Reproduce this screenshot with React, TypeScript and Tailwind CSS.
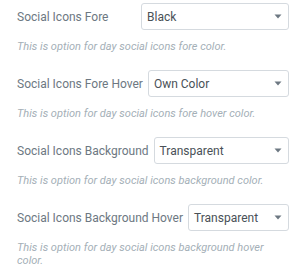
import React from "react";

const rows = [
  { label: "Social Icons Fore", value: "Black", desc: "This is option for day social icons fore color." },
  { label: "Social Icons Fore Hover", value: "Own Color", desc: "This is option for day social icons fore hover color." },
  { label: "Social Icons Background", value: "Transparent", desc: "This is option for day social icons background color." },
  { label: "Social Icons Background Hover", value: "Transparent", desc: "This is option for day social icons background hover color." },
];

export default function App() {
  return (
    <div
      className="w-[298px] h-[269px] bg-white pl-[17px] pr-[9px] overflow-hidden"
      style={{ fontFamily: "Roboto, 'Liberation Sans', sans-serif" }}
    >
      {rows.map((r) => (
        <div key={r.label} className="pt-[3px] pb-[14px]">
          <div className="flex items-center h-[27px]">
            <div className="shrink-0 text-[12px] text-[#6d7882] whitespace-nowrap mr-[5px]">{r.label}</div>
            <div className="ml-auto flex-1 max-w-[148px] h-[27px] border border-[#d5dadf] rounded-[3px] flex items-center pl-[5px] pr-[6px]">
              <span className="flex-1 text-[12px] text-[#495157]">{r.value}</span>
              <svg width="8" height="5" viewBox="0 0 8 5" className="shrink-0">
                <path d="M0.5 0.5 L7.5 0.5 L4 4.5 Z" fill="#6d7882" />
              </svg>
            </div>
          </div>
          <div className="mt-[10px] text-[11px] leading-[13px] italic text-[#a4afb7]">{r.desc}</div>
        </div>
      ))}
    </div>
  );
}
